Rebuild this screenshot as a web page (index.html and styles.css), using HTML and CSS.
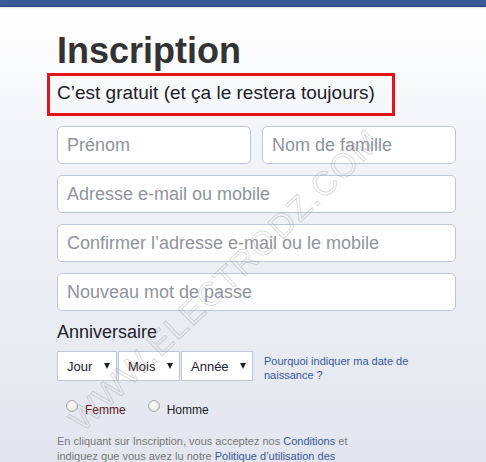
FILE: index.html
```html
<!DOCTYPE html>
<html lang="fr">
<head>
<meta charset="utf-8"/>
<meta content="width=device-width, initial-scale=1.0" name="viewport"/>
<title>Inscription</title>
<link rel="stylesheet" href="styles.css">
</head>
<body>
<div class="topbar"></div>

<div class="signup">
    <h1 class="signup-title">Inscription</h1>
    <div class="free-note">C’est gratuit (et ça le restera toujours)</div>

    <div class="fields">
        <input class="field" type="text" placeholder="Prénom"/>
        <input class="field" type="text" placeholder="Nom de famille"/>
        <input class="field field-wide" type="text" placeholder="Adresse e-mail ou mobile"/>
        <input class="field field-wide" type="text" placeholder="Confirmer l’adresse e-mail ou le mobile"/>
        <input class="field field-wide" type="password" placeholder="Nouveau mot de passe"/>
    </div>

    <h3 class="birthday-label">Anniversaire</h3>
    <div class="birthday-row">
        <div class="selects">
            <div class="select select-day"><span>Jour</span><i class="arrow"></i></div>
            <div class="select select-month"><span>Mois</span><i class="arrow"></i></div>
            <div class="select select-year"><span>Année</span><i class="arrow"></i></div>
        </div>
        <a class="why-link" href="#">Pourquoi indiquer ma date de naissance ?</a>
    </div>

    <div class="gender-row">
        <label class="gender gender-f"><span class="radio"></span>Femme</label>
        <label class="gender"><span class="radio"></span>Homme</label>
    </div>

    <p class="terms">En cliquant sur Inscription, vous acceptez nos <a href="#">Conditions</a> et indiquez que vous avez lu notre <a href="#">Politique d’utilisation des</a></p>
</div>

<!-- watermark over the form -->
<div class="watermark">WWW.ELECTRODZ.COM</div>
</body>
</html>
```

FILE: styles.css
```css
body {
    font-family: "Liberation Sans", Arial, sans-serif;
    margin: 0;
    padding: 0;
    height: 462px;
    overflow: hidden;
    background: linear-gradient(to bottom, #ffffff 10px, #f3f4f8 140px, #e3e6ef 100%);
    color: #1d2129;
}

.topbar {
    height: 6px;
    background: #3b5998;
    border-bottom: 1px solid #2d4486;
    box-shadow: 0 1px 2px rgba(0, 0, 0, 0.12);
}

.signup {
    width: 399px;
    padding: 23px 0 0 57px;
}

.signup-title {
    margin: 0;
    font-size: 36px;
    line-height: 42px;
    font-weight: bold;
    color: #333333;
}

/* red frame round the tagline */
.free-note {
    box-sizing: border-box;
    width: 348px;
    height: 43px;
    margin: 1px 0 0 -10px;
    padding: 6px 7px 0;
    border: 3px solid #e3141e;
    font-size: 19px;
    line-height: 22px;
    color: #1d2129;
}

.fields {
    display: grid;
    grid-template-columns: 1fr 1fr;
    gap: 11px;
    margin-top: 10px;
}

.field {
    box-sizing: border-box;
    width: 100%;
    height: 38px;
    padding: 0 9px;
    border: 1px solid #bdc7d8;
    border-radius: 5px;
    background: #ffffff;
    font-family: inherit;
    font-size: 18px;
    color: #1d2129;
    outline: none;
}

.field::placeholder {
    color: #90949c;
}

.field-wide {
    grid-column: span 2;
}

.birthday-label {
    margin: 11px 0 0;
    font-size: 18px;
    line-height: 21px;
    font-weight: normal;
    color: #1d2129;
}

.birthday-row {
    display: flex;
    align-items: flex-start;
    gap: 11px;
    margin-top: 8px;
}

.selects {
    display: flex;
    gap: 1px;
}

.select {
    box-sizing: border-box;
    height: 30px;
    display: flex;
    align-items: center;
    justify-content: space-between;
    padding: 0 6px 0 9px;
    border: 1px solid #bdc7d8;
    background: #ffffff;
    font-size: 13px;
    color: #1d2129;
}

.select-day { width: 60px; }
.select-month { width: 62px; }
.select-year { width: 72px; }

.arrow {
    width: 0;
    height: 0;
    border-left: 3px solid transparent;
    border-right: 3px solid transparent;
    border-top: 6px solid #1d2129;
}

.why-link {
    width: 150px;
    margin-top: 3px;
    font-size: 11px;
    line-height: 14px;
    color: #365899;
    text-decoration: none;
}

.gender-row {
    display: flex;
    gap: 13px;
    margin-top: 21px;
}

.gender {
    display: flex;
    align-items: flex-start;
    font-size: 12px;
    line-height: 15px;
    color: #1d2129;
}

.gender-f {
    color: #5a1624;
}

.radio {
    box-sizing: border-box;
    width: 12px;
    height: 12px;
    margin: -3px 7px 0 9px;
    border: 1px solid #a9a9a9;
    border-radius: 50%;
    background: radial-gradient(circle at 45% 40%, #ffffff 0, #ececec 55%, #d2d2d2 100%);
}

.terms {
    width: 310px;
    margin: 16px 0 0;
    font-size: 11px;
    line-height: 1.34;
    color: #777777;
}

.terms a {
    color: #365899;
    text-decoration: none;
}

.watermark {
    position: absolute;
    left: 225px;
    top: 280px;
    transform: translate(-50%, -50%) rotate(-44deg);
    white-space: nowrap;
    font-size: 33px;
    letter-spacing: 1.8px;
    color: transparent;
    -webkit-text-stroke: 0.8px rgba(150, 150, 150, 0.42);
    pointer-events: none;
}
```
